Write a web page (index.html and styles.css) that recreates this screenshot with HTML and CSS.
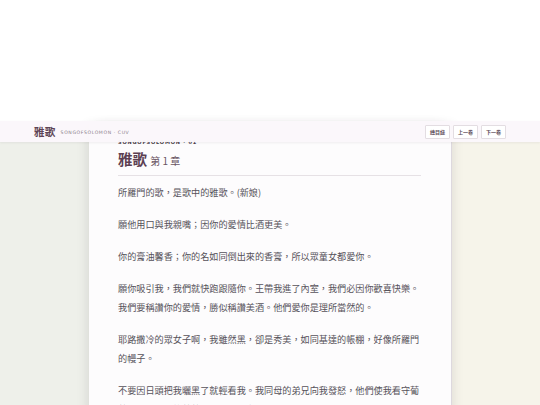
FILE: index.html
```html
<!DOCTYPE html>
<html lang="zh-Hant">
<head>
<meta charset="utf-8">
<title>雅歌 第 1 章</title>
<link rel="stylesheet" href="styles.css">
</head>
<body>
<div class="top"></div>
<header class="bar">
  <div class="brand">
    <span class="brand-title">雅歌</span>
    <span class="brand-sub">SONGOFSOLOMON · CUV</span>
  </div>
  <nav class="nav">
    <a class="btn">總目錄</a>
    <a class="btn">上一卷</a>
    <a class="btn">下一卷</a>
  </nav>
</header>
<div class="stage">
  <aside class="side side-left"></aside>
  <main class="card">
    <div class="kicker">SONGOFSOLOMON · 01</div>
    <h1 class="title">雅歌 <span class="chap">第 1 章</span></h1>
    <p>所羅門的歌，是歌中的雅歌。(新娘)</p>
    <p>願他用口與我親嘴；因你的愛情比酒更美。</p>
    <p>你的膏油馨香；你的名如同倒出來的香膏，所以眾童女都愛你。</p>
    <p>願你吸引我，我們就快跑跟隨你。王帶我進了內室，我們必因你歡喜快樂。我們要稱讚你的愛情，勝似稱讚美酒。他們愛你是理所當然的。</p>
    <p>耶路撒冷的眾女子啊，我雖然黑，卻是秀美，如同基達的帳棚，好像所羅門的幔子。</p>
    <p>不要因日頭把我曬黑了就輕看我。我同母的弟兄向我發怒，他們使我看守葡萄園；我自己的葡萄園卻沒有看守。</p>
  </main>
  <aside class="side side-right"></aside>
</div>
</body>
</html>
```

FILE: styles.css
```css
html, body {
  margin: 0;
  padding: 0;
}
body {
  width: 540px;
  height: 405px;
  overflow: hidden;
  background: #ffffff;
  position: relative;
  font-family: "Liberation Serif", "Noto Sans CJK TC", serif;
}
.top {
  height: 121px;
  background: #ffffff;
}
.bar {
  position: absolute;
  top: 121px;
  left: 0;
  right: 0;
  height: 21px;
  background: rgba(251, 247, 251, 0.97);
  box-shadow: 0 1px 2px rgba(80, 60, 80, 0.08);
  display: flex;
  align-items: center;
  justify-content: space-between;
  padding: 0 34px 0 34px;
  box-sizing: border-box;
  z-index: 2;
}
.brand {
  display: flex;
  align-items: center;
  gap: 5px;
}
.brand-title {
  font-family: "Noto Sans CJK TC", sans-serif;
  font-weight: 700;
  font-size: 10.5px;
  color: #5e4455;
  letter-spacing: 0.3px;
}
.brand-sub {
  font-family: "DejaVu Sans", sans-serif;
  font-size: 4.6px;
  color: #8a8089;
  letter-spacing: 0.6px;
  margin-top: 1px;
}
.nav {
  display: flex;
  gap: 3px;
}
.btn {
  font-family: "Noto Sans CJK TC", sans-serif;
  font-size: 5px;
  font-weight: 700;
  color: #5b4a56;
  background: #ffffff;
  border: 1px solid #e3dde2;
  border-radius: 1px;
  padding: 3px 4px;
  line-height: 6px;
}
.stage {
  display: grid;
  grid-template-columns: 89px 362px 89px;
  height: 284px;
}
.side-left {
  background: #eef0ea;
}
.side-right {
  background: #f6f4ea;
  border-left: 1px solid #ebe7ec;
}
.card {
  background: #fdfcfd;
  padding: 18px 30px 0 29px;
  box-shadow: -6px 0 10px -4px rgba(60, 50, 60, 0.12), 6px 0 10px -4px rgba(60, 50, 60, 0.12);
  position: relative;
  z-index: 1;
  color: #555055;
}
.kicker {
  font-family: "DejaVu Sans", sans-serif;
  font-weight: 700;
  font-size: 5px;
  letter-spacing: 0.8px;
  color: #4a4049;
  line-height: 6px;
}
.title {
  margin: 3px 0 0 0;
  font-family: "Noto Sans CJK TC", sans-serif;
  font-weight: 700;
  font-size: 14.5px;
  line-height: 22px;
  color: #5c3f52;
  padding-bottom: 3px;
  border-bottom: 1px solid #e6e1e5;
}
.chap {
  font-weight: 400;
  font-size: 10px;
  color: #6a5563;
}
.card p {
  margin: 13px 0 0 0;
  font-family: "Noto Sans CJK TC", sans-serif;
  font-size: 9.15px;
  line-height: 19px;
  color: #56525a;
}
.card p:first-of-type {
  margin-top: 7px;
}
```
